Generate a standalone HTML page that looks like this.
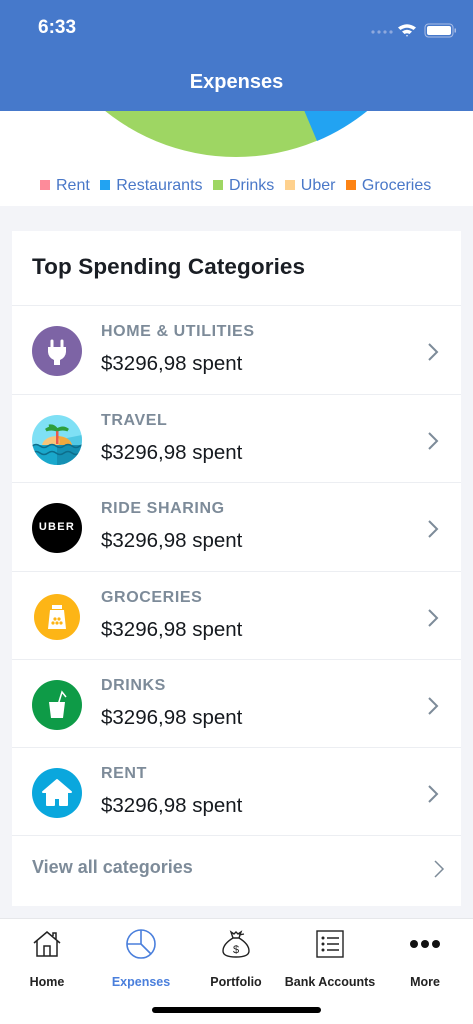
<!DOCTYPE html>
<html><head><meta charset="utf-8"><style>
*{margin:0;padding:0;box-sizing:border-box}
body{width:473px;height:1024px;overflow:hidden;background:#f3f4f8;font-family:"Liberation Sans","DejaVu Sans",sans-serif;position:relative}
.hdr{position:absolute;left:0;top:0;width:473px;height:111px;background:#4679cb;color:#fff;z-index:2}
.time{position:absolute;left:38px;top:17px;font-size:19px;font-weight:600}
.title{position:absolute;left:0;width:473px;top:71px;text-align:center;font-size:20px;font-weight:600}
.chart{position:absolute;left:0;top:111px;width:473px;height:95px;background:#fff;overflow:hidden}
.legend{position:absolute;top:177px;left:40px;font-size:16px;color:#4a78c8;white-space:nowrap;z-index:3}
.legend span.sq{display:inline-block;width:10px;height:10px;margin:0 6px 0 0;vertical-align:0px}
.legend .it{margin-right:6px}
.card{position:absolute;left:12px;top:231px;width:449px;height:675px;background:#fff}
.ct{position:absolute;left:20px;top:254px;font-size:22.5px;font-weight:600;color:#1a1e24;letter-spacing:0.1px}
.row{position:absolute;left:12px;width:449px;height:88px;border-top:1.5px solid #eceef2}
.ic{position:absolute;left:20px;top:20px;width:50px;height:50px;border-radius:50%;overflow:hidden}
.cat{position:absolute;left:89px;top:17px;font-size:16px;color:#7d8b99;letter-spacing:0.6px;font-weight:600}
.amt{position:absolute;left:89px;top:46px;font-size:20.5px;color:#15191e}
.chev{position:absolute;right:22px;top:36px}
.tab{position:absolute;left:0;top:918px;width:473px;height:106px;background:#fff;border-top:1px solid #e6e7ea}
.ti{position:absolute;top:10px;width:94px;text-align:center}
.tl{position:absolute;top:46px;width:100%;font-size:12.5px;font-weight:600;color:#222;text-align:center}
.home{position:absolute;left:152px;top:1007px;width:169px;height:6px;border-radius:3px;background:#000}
</style></head><body>
<div class="hdr">
<div class="time">6:33</div>
<svg style="position:absolute;left:370px;top:22px" width="90" height="16">
<g fill="#8fa9de"><circle cx="3" cy="10" r="1.6"/><circle cx="9" cy="10" r="1.6"/><circle cx="15" cy="10" r="1.6"/><circle cx="21" cy="10" r="1.6"/></g>
<path d="M28 5.5 Q37 -1 46 5.5 L43.5 8 Q37 3.5 30.5 8Z M32 9.5 Q37 6 42 9.5 L39.5 12 Q37 10.5 34.5 12Z M36 13.5 L37 14.8 L38 13.5 Q37 12.8 36 13.5Z" fill="#fff"/>
<rect x="55" y="2" width="28" height="13" rx="3.5" fill="none" stroke="#a9bde6" stroke-width="1"/>
<rect x="57" y="4" width="24" height="9" rx="2" fill="#fff"/>
<rect x="84.5" y="6.5" width="1.5" height="4" fill="#a9bde6"/>
</svg>
<div class="title">Expenses</div>
</div>
<div class="chart">
<svg width="473" height="95" style="position:absolute;left:0;top:0">
<circle cx="236" cy="-163" r="209" fill="#9ed663"/>
<path d="M236 -163 L317 30 A209 209 0 0 0 445 -163Z" fill="#22a3f2"/>
</svg>
</div>
<div class="legend"><span class="it"><span class="sq" style="background:#fd8b9a"></span>Rent</span> <span class="it"><span class="sq" style="background:#22a3f2"></span>Restaurants</span> <span class="it"><span class="sq" style="background:#9ed663"></span>Drinks</span> <span class="it"><span class="sq" style="background:#fed18e"></span>Uber</span> <span class="it"><span class="sq" style="background:#fd8314"></span>Groceries</span></div>
<div class="card"><div class="ct" style="top:23px">Top Spending Categories</div></div>

<div class="row" style="top:305px"><div class="ic" style="background:#7d64a5"><svg width="50" height="50"><path d="M20 15v7M30 15v7" stroke="#fff" stroke-width="3" stroke-linecap="round"/><path d="M16 21h18v5a9 9 0 0 1-6 8v5h-6v-5a9 9 0 0 1-6-8z" fill="#fff"/></svg></div><div class="cat">HOME &amp; UTILITIES</div><div class="amt">$3296,98 spent</div><svg class="chev" width="12" height="20"><path d="M2 2l8 8-8 8" stroke="#7d8b99" stroke-width="2" fill="none"/></svg></div>

<div class="row" style="top:394px"><div class="ic" style="background:#7fe0f5"><svg width="50" height="50"><path d="M25 25 L50 50 L50 20Z" fill="#34b9d9" opacity=".6"/><path d="M10 31a15 10 0 0 1 30 0z" fill="#f7c67a"/><path d="M26 31a15 10 0 0 0 -1-10 15 10 0 0 1 15 10z" fill="#f1a93e"/><rect x="24" y="14" width="2.5" height="15" fill="#e9584a"/><path d="M25 15q-6-4-11 0q5-2 11 0zm0 0q6-4 11 0q-5-2-11 0zm0 0q-3-5-8-4q5 0 8 4z" stroke="#2e9e3b" stroke-width="3" fill="none"/><rect x="0" y="30" width="50" height="20" fill="#1aa8cc"/><rect x="25" y="30" width="25" height="20" fill="#1590b3"/><path d="M0 31q4-3 8 0t8 0t8 0t8 0t8 0t8 0t8 0M0 38q4-3 8 0t8 0t8 0t8 0t8 0t8 0t8 0" stroke="#0d6e8c" stroke-width="1.5" fill="none"/></svg></div><div class="cat">TRAVEL</div><div class="amt">$3296,98 spent</div><svg class="chev" width="12" height="20"><path d="M2 2l8 8-8 8" stroke="#7d8b99" stroke-width="2" fill="none"/></svg></div>

<div class="row" style="top:482px"><div class="ic" style="background:#000"><div style="position:absolute;left:0;width:50px;top:18px;text-align:center;color:#fff;font-size:11px;font-weight:700;letter-spacing:1.3px">UBER</div></div><div class="cat">RIDE SHARING</div><div class="amt">$3296,98 spent</div><svg class="chev" width="12" height="20"><path d="M2 2l8 8-8 8" stroke="#7d8b99" stroke-width="2" fill="none"/></svg></div>

<div class="row" style="top:571px"><div class="ic" style="background:#fdb516;width:46px;height:46px;left:22px;top:22px"><svg width="46" height="46"><rect x="18" y="11" width="10" height="4" fill="#fff"/><path d="M16 16h14l2 19h-18z" fill="#fff"/><g fill="#fdb516"><circle cx="21" cy="25" r="1.6"/><circle cx="25" cy="25" r="1.6"/><circle cx="23" cy="29" r="1.6"/><circle cx="19" cy="29" r="1.6"/><circle cx="27" cy="29" r="1.6"/></g></svg></div><div class="cat">GROCERIES</div><div class="amt">$3296,98 spent</div><svg class="chev" width="12" height="20"><path d="M2 2l8 8-8 8" stroke="#7d8b99" stroke-width="2" fill="none"/></svg></div>

<div class="row" style="top:659px"><div class="ic" style="background:#0e9b47"><svg width="50" height="50"><path d="M26 25l4-13 4 5" stroke="#fff" stroke-width="1.5" fill="none"/><path d="M17 22h16l-2 16h-12z" fill="#fff"/></svg></div><div class="cat">DRINKS</div><div class="amt">$3296,98 spent</div><svg class="chev" width="12" height="20"><path d="M2 2l8 8-8 8" stroke="#7d8b99" stroke-width="2" fill="none"/></svg></div>

<div class="row" style="top:747px"><div class="ic" style="background:#0aa7dd"><svg width="50" height="50"><path d="M25 12l14 12h-4v13h-7v-7h-6v7h-7v-13h-4z" fill="#fff" stroke="#fff" stroke-linejoin="round" stroke-width="2"/></svg></div><div class="cat">RENT</div><div class="amt">$3296,98 spent</div><svg class="chev" width="12" height="20"><path d="M2 2l8 8-8 8" stroke="#7d8b99" stroke-width="2" fill="none"/></svg></div>

<div class="row" style="top:835px;height:71px"><div style="position:absolute;left:20px;top:21px;font-size:18px;color:#7d8b99;font-weight:600">View all categories</div><svg class="chev" style="top:23px;right:16px" width="12" height="20"><path d="M2 2l8 8-8 8" stroke="#7d8b99" stroke-width="1.5" fill="none"/></svg></div>

<div class="tab">
<div class="ti" style="left:0"><svg width="32" height="30"><path d="M3 14L16 3l13 11M6 11v16h20V11M13 27v-10h6v10M22 7V4h3v6" stroke="#222" stroke-width="1.5" fill="none"/></svg><div class="tl">Home</div></div>
<div class="ti" style="left:94px"><svg width="32" height="30"><circle cx="16" cy="15" r="14" stroke="#4a7fdc" stroke-width="1.6" fill="none"/><path d="M16 1v14H2M16 15l10 10" stroke="#4a7fdc" stroke-width="1.6" fill="none"/></svg><div class="tl" style="color:#4a7fdc">Expenses</div></div>
<div class="ti" style="left:189px"><svg width="32" height="30"><path d="M11 3l3 2 2-2 2 2 3-2-2 6h-6z M13 9q-10 6-10 13q0 6 13 6t13-6q0-7-10-13M19 6l5-1" stroke="#222" stroke-width="1.4" fill="none"/><text x="16" y="24" font-size="11" text-anchor="middle" fill="#222" font-family="Liberation Sans">$</text></svg><div class="tl">Portfolio</div></div>
<div class="ti" style="left:283px"><svg width="32" height="30"><rect x="3" y="2" width="26" height="26" stroke="#222" stroke-width="1.4" fill="none"/><g fill="#222"><circle cx="9" cy="9" r="1.5"/><circle cx="9" cy="15" r="1.5"/><circle cx="9" cy="21" r="1.5"/></g><path d="M13 9h12M13 15h12M13 21h12" stroke="#222" stroke-width="1.4"/></svg><div class="tl">Bank Accounts</div></div>
<div class="ti" style="left:378px"><svg width="32" height="30"><g fill="#111"><circle cx="5" cy="15" r="4"/><circle cx="16" cy="15" r="4"/><circle cx="27" cy="15" r="4"/></g></svg><div class="tl">More</div></div>
</div>
<div class="home"></div>
</body></html>
